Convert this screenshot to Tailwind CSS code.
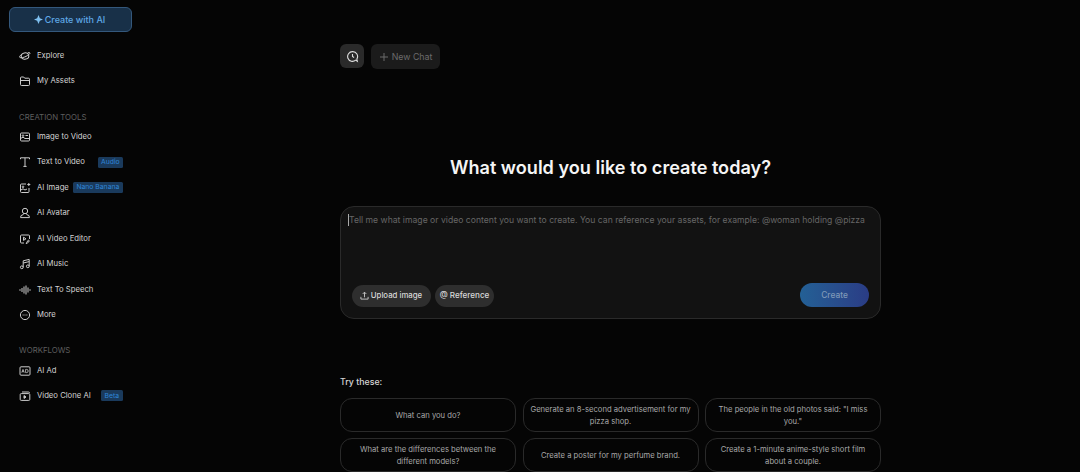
<!DOCTYPE html>
<html><head><meta charset="utf-8"><script src="https://cdn.jsdelivr.net/npm/@tailwindcss/browser@4"></script></head>
<body class="bg-[#050505] overflow-hidden">
<div class="flex h-[472px] w-[1080px] overflow-hidden bg-[#050505] text-white font-['Inter',sans-serif]">
<aside class="w-[340px] shrink-0 pt-[7px] pl-[9px]">
  <button class="flex h-[25px] w-[123px] items-center justify-center gap-[2px] rounded-[6px] border border-[#34587c] bg-[#183048] pr-[2px] text-[9px] font-medium text-[#5fa8e6]"><svg width="9" height="9" viewBox="0 0 8 8" fill="#7fc0f0"><path d="M4 0 5.2 2.8 8 4 5.2 5.2 4 8 2.8 5.2 0 4 2.8 2.8Z"/></svg>Create with AI</button>
  <nav class="mt-[11.4px] flex flex-col text-[7.7px] text-[#d4d4d4]">
    <a class="flex h-[25.2px] items-center gap-[6px] pl-[10px]"><svg class="size-[12px]" viewBox="0 0 12 12" fill="none" stroke="#ccc" stroke-width="1"><ellipse cx="6" cy="6" rx="3.8" ry="3.2" transform="rotate(-15 6 6)"/><path d="M2.6 4.6C1 5.4.2 6.8.8 7.4 1.8 8.2 4.6 7.6 7 6.4S11.4 3.6 11 3C10.7 2.5 9.8 2.5 8.8 2.8"/></svg>Explore</a>
    <a class="flex h-[25.2px] items-center gap-[6px] pl-[10px]"><svg class="size-[12px]" viewBox="0 0 12 12" fill="none" stroke="#ccc" stroke-width="1"><path d="M1.5 3a1 1 0 0 1 1-1h2.2l1 1.2h3.8a1 1 0 0 1 1 1V9.5a1 1 0 0 1-1 1h-7a1 1 0 0 1-1-1Z"/><path d="M1.5 5.5h9"/></svg>My Assets</a>
    <div class="mt-[18px] flex h-[12px] items-center pl-[10px] text-[7.8px] text-[#5e5e5e]">CREATION TOOLS</div>
    <a class="flex h-[25.5px] items-center gap-[6px] pl-[10px]"><svg class="size-[12px]" viewBox="0 0 12 12" fill="none" stroke="#ccc" stroke-width="1"><rect x="1.5" y="2" width="9" height="8" rx="1"/><circle cx="4" cy="4.6" r=".8"/><path d="M1.5 7.5 4 6.2 6 7.5h4.5M6.5 4.5h2.5"/></svg>Image to Video</a>
    <a class="flex h-[25.5px] items-center gap-[6px] pl-[10px]"><svg class="size-[12px]" viewBox="0 0 12 12" fill="none" stroke="#ccc" stroke-width="1"><path d="M1.5 3.2V1.8h9v1.4M6 1.8v8.6M4.4 10.4h3.2"/></svg>Text to Video<span class="ml-[7px] flex h-[11px] w-[25px] items-center justify-center rounded-[1.5px] bg-[#1a3a5c] text-[6.8px] text-[#2f86d8]">Audio</span></a>
    <a class="flex h-[25.5px] items-center gap-[6px] pl-[10px]"><svg class="size-[12px]" viewBox="0 0 12 12" fill="none" stroke="#ccc" stroke-width="1"><path d="M7 2H2.5a1 1 0 0 0-1 1v6.5a1 1 0 0 0 1 1h6.5a1 1 0 0 0 1-1V6"/><circle cx="4" cy="4.8" r=".8"/><path d="M1.5 8.2 4 6.8 6 8l2-1M9.8 1v3M8.3 2.5h3"/></svg>AI Image<span class="-ml-[2px] flex h-[11px] w-[50px] items-center justify-center rounded-[1.5px] bg-[#1a3a5c] text-[6.8px] text-[#2f86d8]">Nano Banana</span></a>
    <a class="flex h-[25.5px] items-center gap-[6px] pl-[10px]"><svg class="size-[12px]" viewBox="0 0 12 12" fill="none" stroke="#ccc" stroke-width="1"><circle cx="6" cy="4" r="2.7"/><path d="M4.6 6.4 4.2 7.6 2 8.6 1.6 10.6h8.8L10 8.6 7.8 7.6 7.4 6.4"/></svg>AI Avatar</a>
    <a class="flex h-[25.5px] items-center gap-[6px] pl-[10px]"><svg class="size-[12px]" viewBox="0 0 12 12" fill="none" stroke="#ccc" stroke-width="1"><path d="M5 10H2.5a1 1 0 0 1-1-1V3a1 1 0 0 1 1-1h7a1 1 0 0 1 1 1v3"/><path d="M4.5 4.2 7 5.8 4.5 7.4Z"/><path d="M9.5 7 7.5 9.6 7.2 10.6 8.3 10.3 10.4 7.8Z"/></svg>AI Video Editor</a>
    <a class="flex h-[25.5px] items-center gap-[6px] pl-[10px]"><svg class="size-[12px]" viewBox="0 0 12 12" fill="none" stroke="#ccc" stroke-width="1"><circle cx="2.8" cy="9.3" r="1.4"/><circle cx="8.8" cy="8.3" r="1.4"/><path d="M4.2 9.3V2.8L10.2 1.4V8.3M4.2 5 10.2 3.6"/></svg>AI Music</a>
    <a class="flex h-[25.5px] items-center gap-[6px] pl-[10px]"><svg class="size-[12px]" viewBox="0 0 12 12" fill="none" stroke="#ccc" stroke-width="1"><path d="M1 5.2v1.6M3 4v4M5 2.5v7M7 1.5v9M9 3.5v5M11 5.2v1.6"/></svg>Text To Speech</a>
    <a class="flex h-[25.5px] items-center gap-[6px] pl-[10px]"><svg class="size-[12px]" viewBox="0 0 12 12" fill="none" stroke="#ccc" stroke-width="1"><circle cx="6" cy="6" r="4.6"/><path d="M3.6 6h4.8" stroke-dasharray="1 .9"/></svg>More</a>
    <div class="mt-[17px] flex h-[12px] items-center pl-[10px] text-[7.8px] text-[#5e5e5e]">WORKFLOWS</div>
    <a class="mt-[1.3px] flex h-[25.2px] items-center gap-[6px] pl-[10px]"><svg class="size-[12px]" viewBox="0 0 12 12" fill="none" stroke="#ccc" stroke-width="1"><rect x="1" y="1.8" width="10" height="8.4" rx="1"/><path d="M2.8 7.6 4 4.4 5.2 7.6M3.3 6.6h1.4M6.6 4.4v3.2h1a1.6 1.6 0 0 0 0-3.2Z" stroke-width=".8"/></svg>AI Ad</a>
    <a class="flex h-[25.2px] items-center gap-[6px] pl-[10px]"><svg class="size-[12px]" viewBox="0 0 12 12" fill="none" stroke="#ccc" stroke-width="1"><path d="M3 2h6.5a1 1 0 0 1 1 1"/><rect x="1.2" y="3.6" width="9.6" height="6.8" rx="1"/><path d="M5 5.6 7 7 5 8.4Z" fill="#ccc"/></svg>Video Clone AI<span class="ml-[4px] flex h-[11px] w-[22px] items-center justify-center rounded-[1.5px] bg-[#1a3a5c] text-[6.8px] text-[#2f86d8]">Beta</span></a>
  </nav>
</aside>
<main class="w-[541px] shrink-0 pt-[44px]">
  <div class="flex gap-[7px]">
    <button class="flex size-[24px] items-center justify-center rounded-[6px] bg-[#2a2a2a]"><svg class="size-[13px]" viewBox="0 0 14 14" fill="none" stroke="#ddd" stroke-width="1.2"><path d="M7 1.8a5.2 5.2 0 1 0 3.4 9.1l1.8 1.3-.5-2.5A5.2 5.2 0 0 0 7 1.8Z"/><path d="M7 4.4V7l1.7 1"/></svg></button>
    <button class="flex h-[25px] w-[69px] items-center justify-center gap-[3px] rounded-[6px] bg-[#1b1b1b] text-[8.8px] text-[#6b6b6b]"><svg class="size-[10px]" viewBox="0 0 10 10" fill="none" stroke="#6b6b6b" stroke-width="1"><path d="M5 1v8M1 5h8"/></svg>New Chat</button>
  </div>
  <h1 class="mt-[86px] text-center text-[18.1px] leading-[24px] font-semibold text-[#f5f5f5]">What would you like to create today?</h1>
  <section class="mt-[27px] flex h-[113px] flex-col justify-between rounded-[14px] border border-[#2a2a2a] bg-[#121212] pt-[7px] pr-[11px] pb-[11px] pl-[7px]">
    <div class="flex items-center text-[8.62px] leading-[12px] tracking-[0.012px] text-[#666] whitespace-nowrap"><span class="h-[12px] w-px shrink-0 bg-[#aaa]"></span>Tell me what image or video content you want to create. You can reference your assets, for example: @woman holding @pizza</div>
    <div class="flex items-center justify-between pl-[4px]">
      <div class="flex gap-[4px] mt-[1px]">
        <button class="flex h-[22px] w-[79px] items-center justify-center gap-[2px] rounded-full bg-[#2e2e2e] pr-[1px] text-[7.8px] font-medium text-[#d8d8d8]"><svg class="size-[9px]" viewBox="0 0 10 10" fill="none" stroke="#ccc" stroke-width="1"><path d="M5 7V1.5M3 3.3 5 1.3 7 3.3M1 6.5V9h8V6.5"/></svg>Upload image</button>
        <button class="flex h-[22px] w-[59px] items-center justify-center rounded-full bg-[#2e2e2e] text-[8.1px] font-medium text-[#d8d8d8]">@ Reference</button>
      </div>
      <button class="h-[24px] w-[69px] rounded-full bg-gradient-to-r from-[#236095] to-[#2a3c85] text-[8.4px] font-medium text-[#7f99b8]">Create</button>
    </div>
  </section>
  <p class="mt-[57px] text-[8.8px] leading-[12px] font-medium text-[#d6d6d6]">Try these:</p>
  <div class="mt-[10px] grid grid-cols-[176px_176px_176px] gap-x-[6.5px] gap-y-[6px] text-center text-[7.65px] leading-[12px] text-[#a8a8a8]">
    <div class="flex h-[34px] items-center justify-center rounded-[12px] border border-[#2a2a2a] px-[6px] pt-[1px]">What can you do?</div>
    <div class="flex h-[34px] items-center justify-center rounded-[12px] border border-[#2a2a2a] px-[6px] pt-[1px]">Generate an 8-second advertisement for my pizza shop.</div>
    <div class="flex h-[34px] items-center justify-center rounded-[12px] border border-[#2a2a2a] px-[6px] pt-[1px]">The people in the old photos said: "I miss you."</div>
    <div class="flex h-[34px] items-center justify-center rounded-[12px] border border-[#2a2a2a] px-[6px] pt-[1px]">What are the differences between the different models?</div>
    <div class="flex h-[34px] items-center justify-center rounded-[12px] border border-[#2a2a2a] px-[6px] pt-[1px]">Create a poster for my perfume brand.</div>
    <div class="flex h-[34px] items-center justify-center rounded-[12px] border border-[#2a2a2a] px-[6px] pt-[1px]">Create a 1-minute anime-style short film about a couple.</div>
  </div>
</main>
</div>
</body></html>
